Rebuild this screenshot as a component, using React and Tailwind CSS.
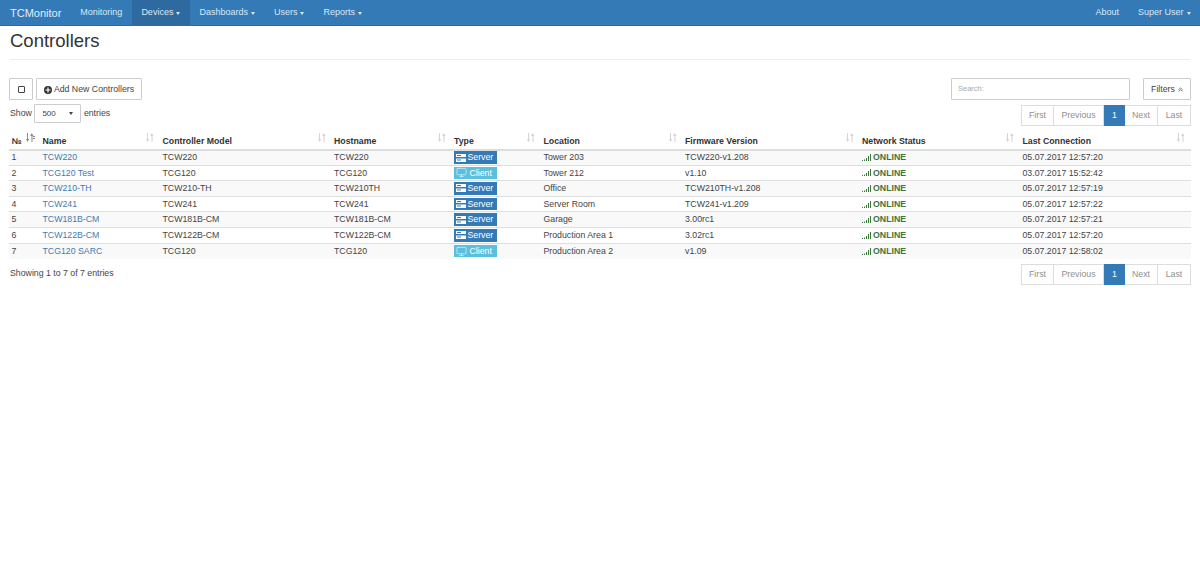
import { Monitor } from 'lucide-react'

const rows = [
	['TCW220', 'TCW220', 'TCW220', 'Server', 'Tower 203', 'TCW220-v1.208', '05.07.2017 12:57:20'],
	['TCG120 Test', 'TCG120', 'TCG120', 'Client', 'Tower 212', 'v1.10', '03.07.2017 15:52:42'],
	['TCW210-TH', 'TCW210-TH', 'TCW210TH', 'Server', 'Office', 'TCW210TH-v1.208', '05.07.2017 12:57:19'],
	['TCW241', 'TCW241', 'TCW241', 'Server', 'Server Room', 'TCW241-v1.209', '05.07.2017 12:57:22'],
	['TCW181B-CM', 'TCW181B-CM', 'TCW181B-CM', 'Server', 'Garage', '3.00rc1', '05.07.2017 12:57:21'],
	['TCW122B-CM', 'TCW122B-CM', 'TCW122B-CM', 'Server', 'Production Area 1', '3.02rc1', '05.07.2017 12:57:20'],
	['TCG120 SARC', 'TCG120', 'TCG120', 'Client', 'Production Area 2', 'v1.09', '05.07.2017 12:58:02'],
]

const columns = [
	['Name', 'w-[120px]'],
	['Controller Model', 'w-[171.5px]'],
	['Hostname', 'w-[120px]'],
	['Type', 'w-[89.5px]'],
	['Location', 'w-[141.5px]'],
	['Firmware Version', 'w-[177px]'],
	['Network Status', 'w-[160.5px]'],
	['Last Connection', 'w-[171px]'],
]

const Caret = () => (
	<span className="ml-[3px] inline-block align-middle border-x-[2.5px] border-t-[3px] border-x-transparent border-t-current" />
)

const NavItem = ({ children, caret, active }) => (
	<a className={`flex items-center px-[9.5px] pt-[1px] h-full ${active ? 'bg-[#2e6a9f]' : ''}`}>
		{children}
		{caret && <Caret />}
	</a>
)

const SortIcon = ({ active }) => (
	<svg width="9" height="9" viewBox="0 0 9 9" className="absolute right-[5px] top-[6px]" fill={active ? '#8a8a8a' : '#d4d4d4'}>
		<path d="M1 0h1v6h1.200L1.500 9 0 6h1zM5.800 0l1.700 3H6.500v6h-1V3H4.100z" />
		{active && <path d="M7 3h2v1H7zM7 5h2v1H7z" />}
	</svg>
)

const ServerIcon = () => (
	<svg width="10" height="8" viewBox="0 0 10 8" fill="white" className="shrink-0">
		<path d="M0 0h10v3H0zM0 4.500h10v3.500H0z" />
		<path d="M1 1h4v1H1zM1 5.500h4v1H1z" fill="#337ab7" />
	</svg>
)

const SignalIcon = () => (
	<svg width="9" height="7" viewBox="0 0 9 7" fill="#3c763d" className="shrink-0">
		<path d="M0 6h1v1H0zM2 5.500h1V7H2zM4 4h1v3H4zM6 2h1v5H6zM8 0h1v7H8z" />
	</svg>
)

const TypeBadge = ({ type }) => (
	type === 'Server' ? (
		<span className="flex items-center w-[42.5px] h-[12.500px] bg-[#337ab7] text-white pl-[2px] gap-[1.500px] leading-none">
			<ServerIcon />Server
		</span>
	) : (
		<span className="flex items-center w-[42.5px] h-[12.500px] bg-[#5bc0de] text-white pl-[2px] gap-[2.500px] leading-none">
			<Monitor size={11} strokeWidth={1.2} className="shrink-0" />Client
		</span>
	)
)

const Pagination = () => (
	<div className="flex h-[21px] text-[#8f8f8f]">
		<a className="flex items-center justify-center w-[33px] pt-[1px] border border-[#ddd]">First</a>
		<a className="flex items-center justify-center w-[50px] pt-[1px] border-y border-r border-[#ddd]">Previous</a>
		<a className="flex items-center justify-center w-[21px] pt-[1px] bg-[#337ab7] text-white">1</a>
		<a className="flex items-center justify-center w-[33px] pt-[1px] border-y border-r border-[#ddd]">Next</a>
		<a className="flex items-center justify-center w-[33px] pt-[1px] border-y border-r border-[#ddd]">Last</a>
	</div>
)

export default function App() {
	return (
		<div className="min-h-[574px] bg-white text-[#444] text-[8.75px] font-['Liberation_Sans',Arial,sans-serif]">
			<nav className="flex justify-between h-[26px] bg-[#337ab7] border-b border-[#2e6da4] text-[#dce8f3] text-[9px]">
				<div className="flex items-center">
					<a className="pl-[10px] pr-[9.5px] pt-[1px] text-[11px] text-[#e4eef6]">TCMonitor</a>
					<NavItem>Monitoring</NavItem>
					<NavItem caret active>Devices</NavItem>
					<NavItem caret>Dashboards</NavItem>
					<NavItem caret>Users</NavItem>
					<NavItem caret>Reports</NavItem>
				</div>
				<div className="flex items-center">
					<NavItem>About</NavItem>
					<NavItem caret>Super User</NavItem>
				</div>
			</nav>

			<main className="px-[9px]">
				<div className="h-[34px] mx-[1px] border-b border-[#eee]">
					<h1 className="text-[18.5px] leading-[29px] text-[#333]">Controllers</h1>
				</div>

				<div className="flex justify-between mt-[18px] h-[22px]">
					<div className="flex gap-[3px]">
						<button className="flex items-center justify-center w-[24px] border border-[#ccc] rounded-[1px]">
							<span className="block w-[7px] h-[7px] border border-[#444] rounded-[1px]" />
						</button>
						<button className="flex items-center gap-[1px] w-[106px] pt-[1px] justify-center border border-[#ccc] rounded-[1px]">
							<svg width="8" height="8" viewBox="0 0 8 8" className="shrink-0 mr-[1px]">
								<circle cx="4" cy="4" r="4" fill="#333" />
								<path d="M3.400 1.500h1.200v1.900h1.900v1.200H4.600v1.900H3.400V4.600H1.500V3.400h1.900z" fill="white" />
							</svg>
							Add New Controllers
						</button>
					</div>
					<div className="flex gap-[13px]">
						<input
							placeholder="Search:"
							className="w-[179px] border border-[#ccc] rounded-[1px] px-[6px] text-[7.5px] placeholder:text-[#aaa] outline-none"
						/>
						<button className="flex items-center justify-center w-[48px] pt-[1px] border border-[#ccc] rounded-[1px]">
							Filters
							<svg width="5" height="5" viewBox="0 0 5 5" className="ml-[3px]" fill="none" stroke="#555" strokeWidth="0.7">
								<path d="M0.500 2.500l2-1.500 2 1.500M0.500 4.300l2-1.500 2 1.500" />
							</svg>
						</button>
					</div>
				</div>

				<div className="flex justify-between mt-[4px] h-[23px]">
					<div className="flex items-start gap-[2.5px] pl-[1px]">
						<span className="leading-[19px]">Show</span>
						<div className="flex items-center justify-between w-[47px] h-[19px] border border-[#ccc] rounded-[1px] px-[7px] text-[8px]">
							500
							<span className="border-x-[2px] border-t-[3px] border-x-transparent border-t-[#444]" />
						</div>
						<span className="leading-[19px]">entries</span>
					</div>
					<div className="pt-[1px]">
						<Pagination />
					</div>
				</div>

				<table className="table-fixed w-[1182px] border-collapse">
					<colgroup>
						<col className="w-[31px]" />
						{columns.map(([name, width]) => <col key={name} className={width} />)}
					</colgroup>
					<thead>
						<tr className="h-[22.5px] border-b-2 border-[#ddd] text-[#333]">
							<th className="relative align-bottom text-left font-bold pl-[2.5px] pb-[3px] leading-[10px]">
								№<SortIcon active />
							</th>
							{columns.map(([name]) => (
								<th key={name} className="relative align-bottom text-left font-bold pl-[2.5px] pb-[3px] leading-[10px]">
									{name}<SortIcon />
								</th>
							))}
						</tr>
					</thead>
					<tbody>
						{rows.map((row, i) => (
							<tr key={row[0]} className={`h-[15.6px] border-b border-[#ddd] last:border-b-0 ${i % 2 === 0 ? 'bg-[#f9f9f9]' : ''}`}>
								<td className="pl-[2.5px] leading-none">{i + 1}</td>
								<td className="pl-[2.5px] leading-none text-[#3f7cb0]">{row[0]}</td>
								<td className="pl-[2.5px] leading-none">{row[1]}</td>
								<td className="pl-[2.5px] leading-none">{row[2]}</td>
								<td className="pl-[2.5px] leading-none"><TypeBadge type={row[3]} /></td>
								<td className="pl-[2.5px] leading-none">{row[4]}</td>
								<td className="pl-[2.5px] leading-none">{row[5]}</td>
								<td className="pl-[2.5px] leading-none">
									<span className="flex items-center gap-[2px] font-bold text-[#3c763d]"><SignalIcon />ONLINE</span>
								</td>
								<td className="pl-[2.5px] leading-none">{row[6]}</td>
							</tr>
						))}
					</tbody>
				</table>

				<div className="flex justify-between items-center mt-[5px]">
					<span className="pl-[1px] -mt-[1px]">Showing 1 to 7 of 7 entries</span>
					<Pagination />
				</div>
			</main>
		</div>
	)
}
